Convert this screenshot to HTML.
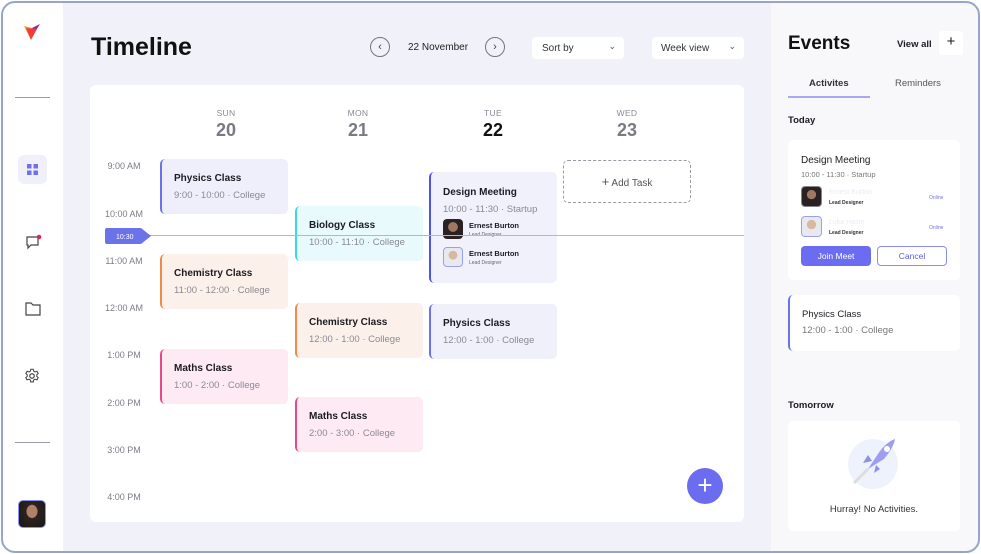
<!DOCTYPE html>
<html><head><meta charset="utf-8"><style>
*{box-sizing:border-box;margin:0;padding:0}
body{width:981px;height:554px;background:#fff;font-family:"Liberation Sans",sans-serif;position:relative;overflow:hidden;color:#1b1b22}
.frame{position:absolute;left:0;top:0;width:981px;height:554px;background:#f1f1f9}
.ov{position:absolute;left:1px;top:1px;width:979px;height:552px;border:2px solid #94a6cc;border-radius:14px;box-shadow:0 0 0 20px #fff;pointer-events:none}
.abs{position:absolute}
.side{position:absolute;left:0;top:0;width:63px;height:100%;background:#fff}
.right{position:absolute;left:771px;top:0;width:210px;height:100%;background:#f8f8fa}
.card{position:absolute;left:90px;top:85px;width:654px;height:437px;background:#fff;border-radius:6px}
.t{position:absolute;font-size:9px;color:#7c7c88;width:60px;text-align:center}
.day{position:absolute;text-align:center;width:80px}
.day .d{font-size:8.5px;color:#8a8a96;letter-spacing:.3px}
.day .n{font-size:18px;font-weight:bold;color:#7a7a84;margin-top:2px}
.ev{position:absolute;width:128px;height:55px;border-radius:5px;border-left:2px solid;padding:14px 0 0 12px}
.ev b{display:block;font-size:10px;color:#1b1b22}
.ev span{display:block;font-size:9.5px;color:#8a8a94;margin-top:6px}
.av{width:20px;height:20px;border-radius:4px;background:radial-gradient(circle at 50% 40%,#a07860 0 30%,#2a2222 32%)}
.av2{background:radial-gradient(circle at 50% 40%,#d8b8a0 0 30%,#e8e8ef 32%);border:1px solid #9aa0ee}
</style></head><body>
<div class="frame">
<div class="side">
 <svg class="abs" style="left:22px;top:22px" width="20" height="20" viewBox="0 0 20 20"><path d="M2 4 L10 6 L9 18Z" fill="#f59a2a"/><path d="M10 6 L18 2 L13 10Z" fill="#a0287a"/><path d="M4 6 L15 7 L9 18Z" fill="#ef3d3d"/></svg>
 <div class="abs" style="left:15px;top:97px;width:35px;height:1px;background:#9a9aa8"></div>
 <div class="abs" style="left:18px;top:155px;width:29px;height:29px;border-radius:6px;background:#f0f0fb"></div>
 <svg class="abs" style="left:26px;top:163px" width="13" height="13"><rect x="1" y="1" width="4.5" height="4.5" fill="#6e70ee"/><rect x="7.5" y="1" width="4.5" height="4.5" fill="#6e70ee"/><rect x="1" y="7.5" width="4.5" height="4.5" fill="#6e70ee"/><rect x="7.5" y="7.5" width="4.5" height="4.5" fill="#6e70ee"/></svg>
 <svg class="abs" style="left:24px;top:233px" width="18" height="18" viewBox="0 0 18 18"><path d="M3 4h11v8H7l-3 3v-3H3z" fill="none" stroke="#444" stroke-width="1.2"/><circle cx="15" cy="4" r="2.3" fill="#e0245e"/></svg>
 <svg class="abs" style="left:24px;top:301px" width="18" height="16" viewBox="0 0 18 16"><path d="M2 2h5l2 2h7v10H2z" fill="none" stroke="#444" stroke-width="1.2"/></svg>
 <svg class="abs" style="left:23px;top:367px" width="18" height="18" viewBox="0 0 24 24"><circle cx="12" cy="12" r="3" fill="none" stroke="#444" stroke-width="1.6"/><path d="M10.3 3h3.4l.5 2.5 2 1.1 2.4-.9 1.7 2.9-1.9 1.7v2.3l1.9 1.7-1.7 2.9-2.4-.9-2 1.1-.5 2.5h-3.4l-.5-2.5-2-1.1-2.4.9-1.7-2.9 1.9-1.7v-2.3L3.8 8.6l1.7-2.9 2.4.9 2-1.1z" fill="none" stroke="#444" stroke-width="1.4"/></svg>
 <div class="abs" style="left:15px;top:442px;width:35px;height:1px;background:#9a9aa8"></div>
 <div class="abs" style="left:18px;top:500px;width:28px;height:28px;border-radius:5px;border:1px solid #8d92ee;background:radial-gradient(ellipse at 50% 40%,#b08068 0 28%,#2b2320 32%,#1a1616)"></div>
</div>
<div class="abs" style="left:91px;top:33px;font-size:25px;font-weight:bold;color:#111">Timeline</div>
<div class="abs" style="left:370px;top:37px;width:20px;height:20px;border:1px solid #777;border-radius:50%;font-size:11px;text-align:center;line-height:18px;color:#444">‹</div>
<div class="abs" style="left:408px;top:42px;font-size:10px;color:#222">22 November</div>
<div class="abs" style="left:485px;top:37px;width:20px;height:20px;border:1px solid #777;border-radius:50%;font-size:11px;text-align:center;line-height:18px;color:#444">›</div>
<div class="abs" style="left:532px;top:37px;width:92px;height:22px;background:#fff;border-radius:4px;font-size:10px;color:#333;padding:6px 0 0 10px">Sort by<span style="position:absolute;right:8px;top:4px;font-size:9px;color:#555">⌄</span></div>
<div class="abs" style="left:652px;top:37px;width:92px;height:22px;background:#fff;border-radius:4px;font-size:10px;color:#333;padding:6px 0 0 9px">Week view<span style="position:absolute;right:8px;top:4px;font-size:9px;color:#555">⌄</span></div>

<div class="card"></div>
<div class="day" style="left:186px;top:108px"><div class="d">SUN</div><div class="n">20</div></div>
<div class="day" style="left:318px;top:108px"><div class="d">MON</div><div class="n">21</div></div>
<div class="day" style="left:453px;top:108px"><div class="d">TUE</div><div class="n" style="color:#111">22</div></div>
<div class="day" style="left:587px;top:108px"><div class="d">WED</div><div class="n">23</div></div>
<div class="t" style="left:94px;top:161px">9:00 AM</div>
<div class="t" style="left:94px;top:209px">10:00 AM</div>
<div class="t" style="left:94px;top:256px">11:00 AM</div>
<div class="t" style="left:94px;top:303px">12:00 AM</div>
<div class="t" style="left:94px;top:350px">1:00 PM</div>
<div class="t" style="left:94px;top:398px">2:00 PM</div>
<div class="t" style="left:94px;top:445px">3:00 PM</div>
<div class="t" style="left:94px;top:492px">4:00 PM</div>

<div class="ev" style="left:160px;top:159px;background:#eeeffb;border-color:#6c72e8"><b>Physics Class</b><span>9:00 - 10:00 · College</span></div>
<div class="ev" style="left:160px;top:254px;background:#fcf0ea;border-color:#f08a4b"><b>Chemistry Class</b><span>11:00 - 12:00 · College</span></div>
<div class="ev" style="left:160px;top:349px;background:#fdeaf3;border-color:#e6498a"><b>Maths Class</b><span>1:00 - 2:00 · College</span></div>
<div class="ev" style="left:295px;top:206px;background:#e9fafd;border-color:#3dd6e8"><b>Biology Class</b><span>10:00 - 11:10 · College</span></div>
<div class="ev" style="left:295px;top:303px;background:#fcf0ea;border-color:#f08a4b"><b>Chemistry Class</b><span>12:00 - 1:00 · College</span></div>
<div class="ev" style="left:295px;top:397px;background:#fdeaf3;border-color:#e6498a"><b>Maths Class</b><span>2:00 - 3:00 · College</span></div>
<div class="ev" style="left:429px;top:304px;background:#f0f0fb;border-color:#6c72e8"><b>Physics Class</b><span>12:00 - 1:00 · College</span></div>
<div class="ev" style="left:429px;top:172px;height:111px;background:#f1f1fc;border-color:#4c56e0;padding-top:15px"><b>Design Meeting</b><span>10:00 - 11:30 · Startup</span>
 <div class="abs" style="left:12px;top:47px;display:flex;align-items:center"><div class="av"></div><div style="margin-left:6px"><div style="font-size:7.5px;font-weight:bold">Ernest Burton</div><div style="font-size:5px;color:#666;margin-top:2px">Lead Designer</div></div></div>
 <div class="abs" style="left:12px;top:75px;display:flex;align-items:center"><div class="av av2"></div><div style="margin-left:6px"><div style="font-size:7.5px;font-weight:bold">Ernest Burton</div><div style="font-size:5px;color:#666;margin-top:2px">Lead Designer</div></div></div>
</div>
<div class="abs" style="left:563px;top:160px;width:128px;height:43px;border:1.3px dashed #9a9aa6;border-radius:5px;font-size:10px;color:#555;text-align:center;line-height:41px"><span style="font-size:13px">+</span> Add Task</div>

<div class="abs" style="left:150px;top:235px;width:594px;height:1px;background:#aeb2f0"></div>
<svg class="abs" style="left:105px;top:228px" width="47" height="16"><path d="M2 0h34l10 8-10 8H2a2 2 0 0 1-2-2V2a2 2 0 0 1 2-2z" fill="#6c72e8"/><text x="11" y="11" font-size="7" fill="#fff" font-family="Liberation Sans">10:30</text></svg>
<div class="abs" style="left:687px;top:468px;width:36px;height:36px;border-radius:50%;background:#6c6cf0;color:#fff;font-size:26px;text-align:center;line-height:34px">+</div>

<div class="right">
 <div class="abs" style="left:17px;top:33px;font-size:19px;font-weight:bold;color:#111">Events</div>
 <div class="abs" style="left:126px;top:39px;font-size:9.5px;font-weight:bold">View all</div>
 <div class="abs" style="left:168px;top:31px;width:24px;height:24px;background:#fff;border-radius:3px;text-align:center;line-height:22px;font-size:15px">+</div>
 <div class="abs" style="left:38px;top:78px;font-size:9.5px;font-weight:bold;color:#333">Activites</div>
 <div class="abs" style="left:124px;top:78px;font-size:9.5px;color:#555">Reminders</div>
 <div class="abs" style="left:17px;top:96px;width:82px;height:1.5px;background:#a9a8f0"></div>
 <div class="abs" style="left:17px;top:115px;font-size:9.5px;font-weight:bold">Today</div>
 <div class="abs" style="left:17px;top:140px;width:172px;height:140px;background:#fff;border-radius:5px">
  <div class="abs" style="left:13px;top:15px;font-size:10px">Design Meeting</div>
  <div class="abs" style="left:13px;top:30px;font-size:7.5px;color:#777">10:00 - 11:30 · Startup</div>
  <div class="abs" style="left:13px;top:46px" ><div class="av" style="width:21px;height:21px;border:1px solid #888"></div></div>
  <div class="abs" style="left:41px;top:49px;font-size:7px;color:#eceaf5">Ernest Burton</div>
  <div class="abs" style="left:41px;top:60px;font-size:5px;color:#333;font-weight:bold">Lead Designer</div>
  <div class="abs" style="left:141px;top:55px;font-size:5px;color:#6c72e8">Online</div>
  <div class="abs" style="left:13px;top:76px"><div class="av av2" style="width:21px;height:21px"></div></div>
  <div class="abs" style="left:41px;top:79px;font-size:7px;color:#eceaf5">Luka Haste</div>
  <div class="abs" style="left:41px;top:90px;font-size:5px;color:#333;font-weight:bold">Lead Designer</div>
  <div class="abs" style="left:141px;top:85px;font-size:5px;color:#6c72e8">Online</div>
  <div class="abs" style="left:13px;top:106px;width:70px;height:20px;border-radius:4px;background:#6c6cf0;color:#fff;font-size:8.5px;text-align:center;line-height:20px">Join Meet</div>
  <div class="abs" style="left:89px;top:106px;width:70px;height:20px;border-radius:4px;border:1px solid #8a8ef0;color:#5a5ee0;font-size:8.5px;text-align:center;line-height:18px">Cancel</div>
 </div>
 <div class="abs" style="left:17px;top:295px;width:172px;height:56px;background:#fff;border-radius:5px;border-left:2px solid #6c72e8;padding:14px 0 0 12px"><div style="font-size:9.5px">Physics Class</div><div style="font-size:9.5px;color:#777;margin-top:5px">12:00 - 1:00 · College</div></div>
 <div class="abs" style="left:17px;top:400px;font-size:9.5px;font-weight:bold">Tomorrow</div>
 <div class="abs" style="left:17px;top:421px;width:172px;height:110px;background:#fff;border-radius:5px">
  <svg class="abs" style="left:60px;top:16px" width="52" height="52" viewBox="0 0 52 52"><circle cx="25" cy="27" r="25" fill="#edf2fd"/><path d="M6 46 L20 32" stroke="#ddd" stroke-width="3"/><path d="M20 32 L32 14 Q40 4 47 2 Q46 10 36 22Z" fill="#9d9ef0"/><path d="M24 24 L15 26 L20 18Z M28 28 L26 36 L32 32Z" fill="#8f8fe6"/><circle cx="39" cy="12" r="3" fill="#fff"/></svg>
  <div class="abs" style="left:0;top:83px;width:100%;text-align:center;font-size:9.5px;color:#333">Hurray! No Activities.</div>
 </div>
</div>
</div>
<div class="ov"></div>
</body></html>
